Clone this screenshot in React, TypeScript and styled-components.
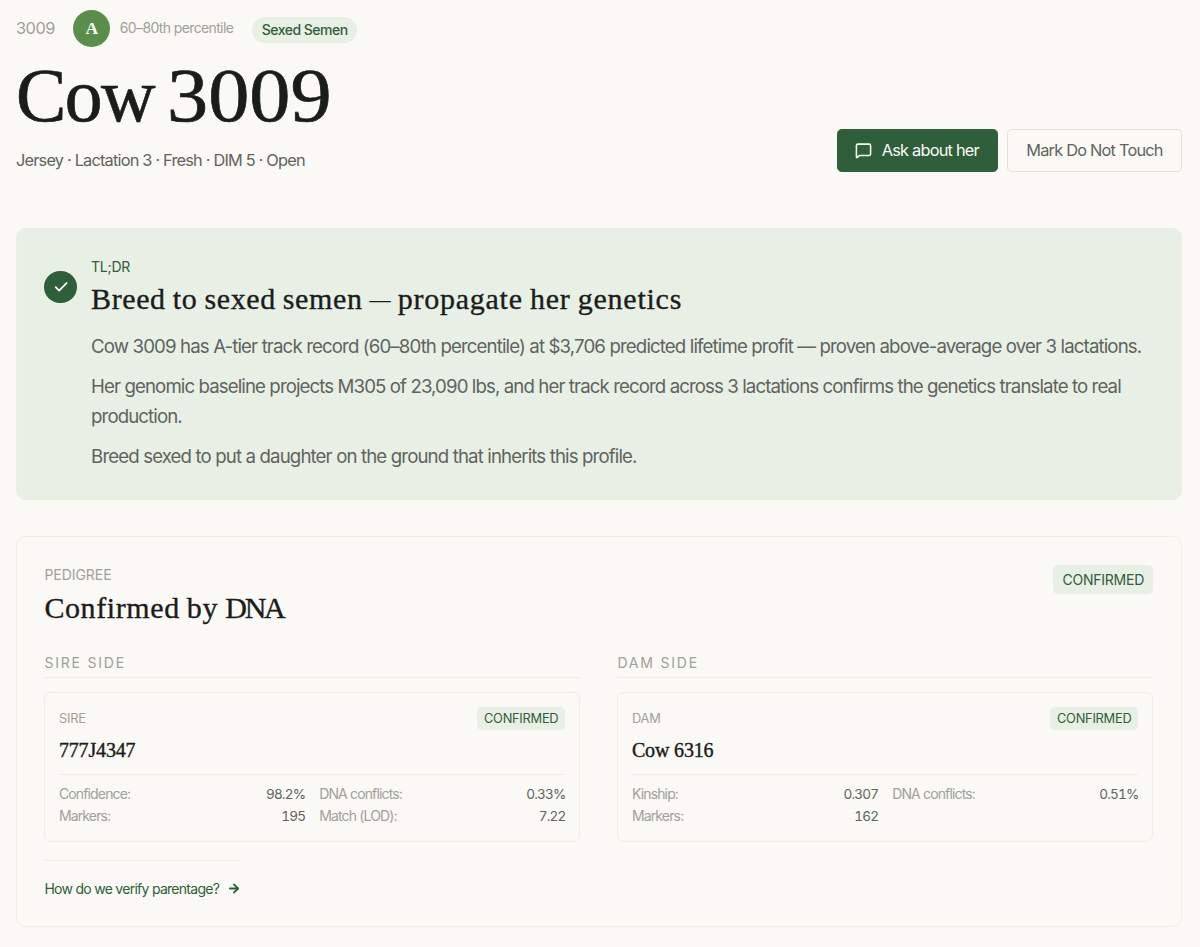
import React from 'react';
import styled, { createGlobalStyle } from 'styled-components';
import { ArrowRight, Check, MessageSquare } from 'lucide-react';

const color = {
  page: '#faf9f5',
  ink: '#1a1d1a',
  body: '#5f645d',
  muted: '#9fa198',
  green: '#2e5e3a',
  tier: '#5a8f4b',
  mint: '#e8efe5',
  line: '#f1ede0',
  outline: '#e4dfd0',
};

const serif = `'Liberation Serif', 'Times New Roman', serif`;
const sans = `Inter, 'Liberation Sans', sans-serif`;

const GlobalStyle = createGlobalStyle`
  *, *::before, *::after { box-sizing: border-box; }
  body {
    margin: 0;
    background: ${color.page};
    color: ${color.ink};
    font-family: ${sans};
    -webkit-font-smoothing: antialiased;
  }
  h1, h2, h3, p, dl, dt, dd { margin: 0; font-weight: 400; }
`;

const Page = styled.main`
  display: flex;
  flex-direction: column;
  padding: 9.6px 18px 20px 16px;
`;

const Header = styled.header`
  display: flex;
  flex-direction: column;
  height: 218.4px;
`;

const MetaRow = styled.div`
  display: flex;
  align-items: center;
  height: 37.4px;
`;

const TagNumber = styled.span`
  width: 57px;
  font-size: 16.33px;
  letter-spacing: -0.5px;
  color: ${color.muted};
`;

const Tier = styled.span`
  display: flex;
  align-items: center;
  justify-content: center;
  width: 37.4px;
  height: 37.4px;
  border-radius: 50%;
  background: ${color.tier};
  color: #fff;
  font: 700 17.5px ${serif};
`;

const Percentile = styled.span`
  margin: 0 18.5px 0 9.4px;
  width: 114px;
  white-space: nowrap;
  font-size: 14px;
  line-height: 20px;
  padding-bottom: 1px;
  letter-spacing: -0.63px;
  color: ${color.muted};
`;

const Pill = styled.span`
  margin-top: 3px;
  padding: 0 9.4px;
  border-radius: 13px;
  background: ${color.mint};
  color: ${color.green};
  font-size: 14px;
  font-weight: 500;
  line-height: 26px;
  letter-spacing: -0.49px;
`;

const Title = styled.h1`
  margin-top: 7.5px;
  font: 400 75.5px/84px ${serif};
  letter-spacing: -1.5px;
  word-spacing: -5px;
  -webkit-text-stroke: 0.7px currentColor;
`;

const TitleNumber = styled.span`
  display: inline-block;
  letter-spacing: 0;
  transform: scaleX(1.09);
  transform-origin: 0 50%;
`;

const HeaderFoot = styled.div`
  display: flex;
  justify-content: space-between;
  margin-top: -9.5px;
`;

const Subtitle = styled.p`
  padding-top: 20px;
  font-size: 16.33px;
  line-height: 22px;
  letter-spacing: -0.8px;
  color: ${color.body};
`;

const Actions = styled.div`
  display: flex;
  gap: 9.3px;
`;

const Button = styled.button<{ $primary?: boolean }>`
  display: flex;
  align-items: center;
  justify-content: center;
  gap: 9.3px;
  width: ${(p) => (p.$primary ? '161px' : '175px')};
  height: 43.5px;
  padding: 0 0 1px;
  border: 1px solid ${(p) => (p.$primary ? color.green : color.outline)};
  border-radius: 4.7px;
  background: ${(p) => (p.$primary ? color.green : 'transparent')};
  color: ${(p) => (p.$primary ? '#fbfaf6' : color.body)};
  font: 400 16.33px ${sans};
  letter-spacing: -0.78px;
`;

const Summary = styled.section`
  display: flex;
  gap: 14px;
  height: 272px;
  padding: 28px 20px 28px 27.4px;
  border: 1px solid ${color.line};
  border-radius: 9.3px;
  background: ${color.mint};
`;

const CheckDisc = styled.span`
  display: flex;
  flex: none;
  align-items: center;
  justify-content: center;
  width: 32.7px;
  height: 32.7px;
  margin-top: 13.7px;
  border-radius: 50%;
  background: ${color.green};
  color: #fff;
`;

const Eyebrow = styled.p<{ $green?: boolean }>`
  font-size: 14px;
  line-height: 20px;
  letter-spacing: ${(p) => (p.$green ? '-0.25px' : '-0.05px')};
  color: ${(p) => (p.$green ? color.green : color.muted)};
`;

const Heading = styled.h2`
  height: 37px;
  margin-top: 3.5px;
  font: 400 30px/37px ${serif};
  letter-spacing: 0.6px;
  word-spacing: -1px;
  -webkit-text-stroke: 0.35px currentColor;
`;

const Dash = styled.span`
  font-size: 21px;
  line-height: 0;
  letter-spacing: 0;
  vertical-align: 2px;
`;

const Clause = styled.span`
  letter-spacing: 0.75px;
`;

const Acronym = styled.span`
  letter-spacing: -2.2px;
`;

const Prose = styled.div`
  display: flex;
  flex-direction: column;
  gap: 9.3px;
  margin-top: 15px;
  font-size: 18.67px;
  line-height: 30.33px;
  letter-spacing: -0.875px;
  color: ${color.body};
`;

const Projection = styled.p`
  letter-spacing: -0.905px;
`;

const Pedigree = styled.section`
  height: 391px;
  margin-top: 36.5px;
  padding: 28px 27.6px 28px 27.4px;
  border: 1px solid ${color.line};
  border-radius: 9.3px;
`;

const PedigreeHead = styled.div`
  display: flex;
  align-items: flex-start;
  justify-content: space-between;
  height: 88px;
`;

const Badge = styled.span<{ $small?: boolean }>`
  padding: 0 ${(p) => (p.$small ? '7px' : '9.4px')};
  border-radius: 4.7px;
  background: ${color.mint};
  color: ${color.green};
  font-size: ${(p) => (p.$small ? '12.83px' : '14px')};
  line-height: ${(p) => (p.$small ? '23.4px' : '29px')};
  letter-spacing: -0.25px;
`;

const Sides = styled.div`
  display: grid;
  grid-template-columns: 1fr 1fr;
  gap: 37px;
`;

const SideTitle = styled.h3`
  height: 24.5px;
  border-bottom: 1px solid ${color.line};
  font-size: 14px;
  line-height: 20px;
  letter-spacing: 1.8px;
  color: ${color.muted};
`;

const Parent = styled.article`
  height: 150.5px;
  margin-top: 14px;
  padding: 14px 14px 14px 13.5px;
  border: 1px solid ${color.line};
  border-radius: 7px;
`;

const ParentHead = styled.div`
  display: flex;
  align-items: center;
  justify-content: space-between;
  font-size: 12.83px;
  letter-spacing: -0.2px;
  color: ${color.muted};
`;

const ParentName = styled.p`
  height: 44.5px;
  padding-top: 7px;
  border-bottom: 1px solid ${color.line};
  font: 400 20px/26px ${serif};
  letter-spacing: -0.15px;
  -webkit-text-stroke: 0.4px currentColor;
`;

const Stats = styled.dl`
  display: grid;
  grid-template-columns: 1fr 1fr;
  gap: 2.6px 14px;
  margin-top: 9px;
  font-size: 14px;
  line-height: 20px;
`;

const Stat = styled.div`
  display: flex;
  justify-content: space-between;
`;

const StatName = styled.dt`
  letter-spacing: -0.85px;
  color: ${color.muted};
`;

const StatValue = styled.dd`
  font-size: 13.6px;
  font-variant-numeric: tabular-nums;
  letter-spacing: -0.85px;
  color: ${color.body};
`;

const VerifyLink = styled.a`
  display: inline-flex;
  align-items: center;
  gap: 8.3px;
  width: 197px;
  height: 38px;
  margin-top: 18px;
  padding-top: 18px;
  border-top: 1px solid ${color.line};
  font-size: 14px;
  letter-spacing: -0.72px;
  white-space: nowrap;
  color: ${color.green};
`;

type ParentInfo = { role: string; side: string; name: string; stats: [string, string][] };

const parents: ParentInfo[] = [
  {
    side: 'SIRE SIDE',
    role: 'SIRE',
    name: '777J4347',
    stats: [
      ['Confidence:', '98.2%'],
      ['DNA conflicts:', '0.33%'],
      ['Markers:', '195'],
      ['Match (LOD):', '7.22'],
    ],
  },
  {
    side: 'DAM SIDE',
    role: 'DAM',
    name: 'Cow 6316',
    stats: [
      ['Kinship:', '0.307'],
      ['DNA conflicts:', '0.51%'],
      ['Markers:', '162'],
    ],
  },
];

function ParentColumn({ parent }: { parent: ParentInfo }) {
  return (
    <div>
      <SideTitle>{parent.side}</SideTitle>
      <Parent>
        <ParentHead>
          <span>{parent.role}</span>
          <Badge $small>CONFIRMED</Badge>
        </ParentHead>
        <ParentName>{parent.name}</ParentName>
        <Stats>
          {parent.stats.map(([name, value]) => (
            <Stat key={name}>
              <StatName>{name}</StatName>
              <StatValue>{value}</StatValue>
            </Stat>
          ))}
        </Stats>
      </Parent>
    </div>
  );
}

export default function App() {
  return (
    <>
      <GlobalStyle />
      <Page>
        <Header>
          <MetaRow>
            <TagNumber>3009</TagNumber>
            <Tier>A</Tier>
            <Percentile>60–80th percentile</Percentile>
            <Pill>Sexed Semen</Pill>
          </MetaRow>
          <Title>
            Cow <TitleNumber>3009</TitleNumber>
          </Title>
          <HeaderFoot>
            <Subtitle>Jersey · Lactation 3 · Fresh · DIM 5 · Open</Subtitle>
            <Actions>
              <Button $primary>
                <MessageSquare size={17} strokeWidth={2.2} />
                Ask about her
              </Button>
              <Button>Mark Do Not Touch</Button>
            </Actions>
          </HeaderFoot>
        </Header>

        <Summary>
          <CheckDisc>
            <Check size={16.3} strokeWidth={2.7} />
          </CheckDisc>
          <div>
            <Eyebrow $green>TL;DR</Eyebrow>
            <Heading>
              Breed to sexed semen <Dash>—</Dash> <Clause>propagate her genetics</Clause>
            </Heading>
            <Prose>
              <p>
                Cow 3009 has A-tier track record (60–80th percentile) at $3,706 predicted lifetime
                profit — proven above-average over 3 lactations.
              </p>
              <Projection>
                Her genomic baseline projects M305 of 23,090 lbs, and her track record across 3
                lactations confirms the genetics translate to real
                <br />
                production.
              </Projection>
              <p>Breed sexed to put a daughter on the ground that inherits this profile.</p>
            </Prose>
          </div>
        </Summary>

        <Pedigree>
          <PedigreeHead>
            <div>
              <Eyebrow>PEDIGREE</Eyebrow>
              <Heading>
                Confirmed by <Acronym>DNA</Acronym>
              </Heading>
            </div>
            <Badge>CONFIRMED</Badge>
          </PedigreeHead>
          <Sides>
            {parents.map((parent) => (
              <ParentColumn key={parent.role} parent={parent} />
            ))}
          </Sides>
          <VerifyLink>
            How do we verify parentage?
            <ArrowRight size={15} strokeWidth={3.2} />
          </VerifyLink>
        </Pedigree>
      </Page>
    </>
  );
}
